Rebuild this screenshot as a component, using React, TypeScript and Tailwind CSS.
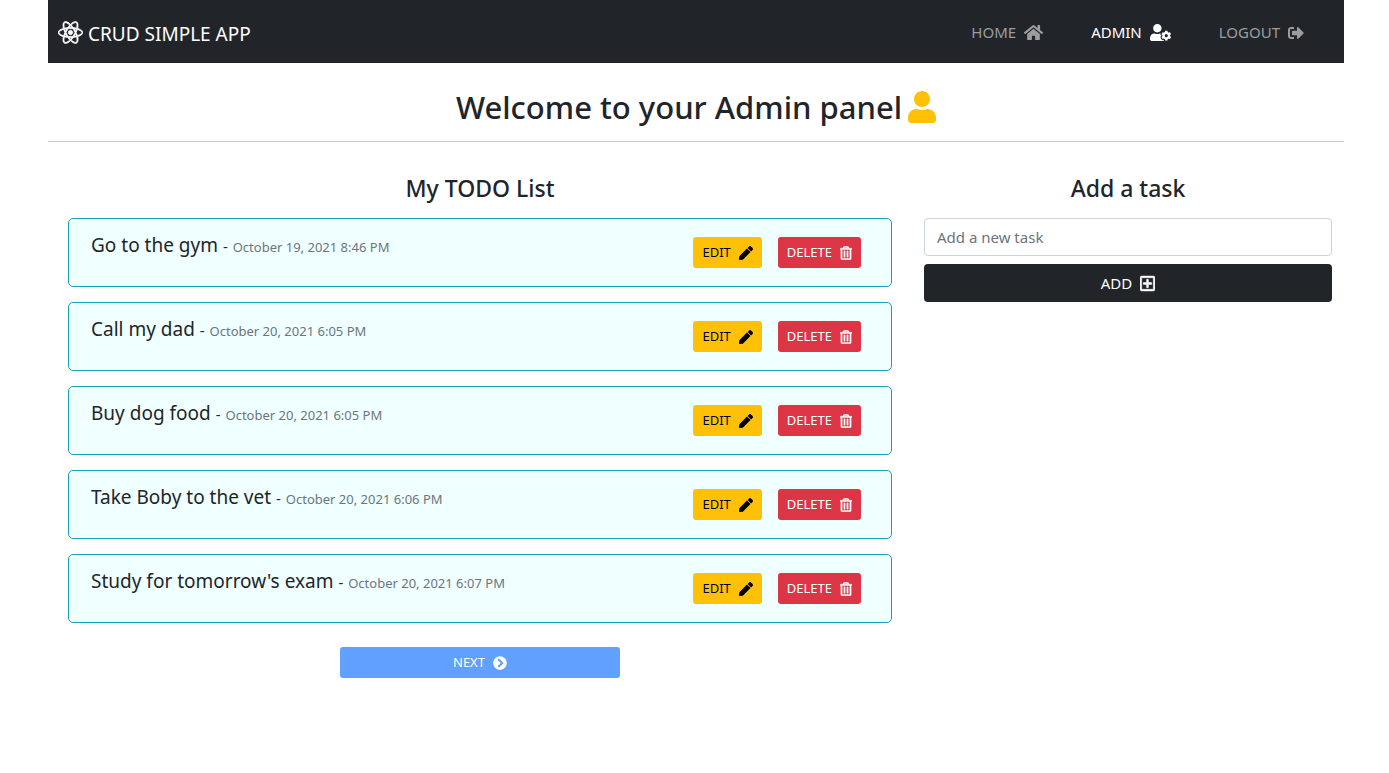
import { useState } from "react";
import {
  FaChevronCircleRight,
  FaHome,
  FaPen,
  FaReact,
  FaRegPlusSquare,
  FaRegTrashAlt,
  FaSignOutAlt,
  FaUser,
  FaUserCog,
} from "react-icons/fa";

const tasks = [
  { id: 1, title: "Go to the gym", date: "October 19, 2021 8:46 PM" },
  { id: 2, title: "Call my dad", date: "October 20, 2021 6:05 PM" },
  { id: 3, title: "Buy dog food", date: "October 20, 2021 6:05 PM" },
  { id: 4, title: "Take Boby to the vet", date: "October 20, 2021 6:06 PM" },
  { id: 5, title: "Study for tomorrow's exam", date: "October 20, 2021 6:07 PM" },
];

function Navbar() {
  return (
    <nav className="flex h-[63px] items-center justify-between bg-[#212529] pt-[2px] pr-10 pl-[10px] text-[15px] text-[#9b9d9f]">
      <a href="#" className="flex items-center gap-[5px] pt-1 text-[19px] text-white">
        <FaReact className="mb-1 size-[25px] stroke-white stroke-[16]" />
        CRUD SIMPLE APP
      </a>
      <div className="flex items-center gap-12">
        <a href="#home" className="flex items-center gap-2">
          HOME <FaHome className="h-[17px] w-[19px]" />
        </a>
        <a href="#admin" className="flex items-center gap-2 text-white">
          ADMIN <FaUserCog className="h-[17px] w-[21px]" />
        </a>
        <a href="#logout" className="flex items-center gap-2">
          LOGOUT <FaSignOutAlt className="size-4" />
        </a>
      </div>
    </nav>
  );
}

function TaskCard({ title, date }: { title: string; date: string }) {
  return (
    <li className="flex items-start justify-between rounded-[5px] border border-[#17a2b8] bg-[#f0ffff] pt-[18px] pr-[30px] pb-[18px] pl-[22px]">
      <p className="-mt-1 text-[19px] leading-6">
        {title} <span className="text-[15px]">-</span>{" "}
        <small className="text-[13px] text-[#6c757d]">{date}</small>
      </p>
      <div className="flex gap-4 text-[13px]">
        <button type="button" className="flex h-[31px] items-center gap-2 rounded-[3px] bg-[#ffc107] px-[9px] text-black">
          EDIT <FaPen className="size-[14px]" />
        </button>
        <button type="button" className="flex h-[31px] items-center gap-2 rounded-[3px] bg-[#dc3545] px-[9px] text-white">
          DELETE <FaRegTrashAlt className="h-[14px] w-3 stroke-white stroke-[16]" />
        </button>
      </div>
    </li>
  );
}

export default function App() {
  const [task, setTask] = useState("");

  return (
    <div className="pr-[45px] pl-12 font-['Noto_Sans','Open_Sans',sans-serif] text-[#212529]">
      <Navbar />
      <h1 className="flex h-[79px] items-center justify-center gap-[6px] border-b border-[#c8c9ca] pt-[10px] text-[31px] font-medium">
        <span>Welcome to your Admin panel</span>
        <FaUser className="h-8 w-7 text-[#ffc107]" />
      </h1>
      <main className="grid grid-cols-3 pt-[30px]">
        <section className="col-span-2 px-3">
          <h2 className="mb-[14px] text-center text-[23px] leading-8 font-medium">My TODO List</h2>
          <ul className="flex flex-col gap-[15px] px-2">
            {tasks.map((item) => (
              <TaskCard key={item.id} title={item.title} date={item.date} />
            ))}
          </ul>
          <button
            type="button"
            className="mx-auto mt-6 flex h-[31px] w-1/3 items-center justify-center gap-2 rounded-[3px] bg-[#62a0ff] text-[13px] text-white"
          >
            NEXT <FaChevronCircleRight className="size-[14px]" />
          </button>
        </section>
        <section className="px-3">
          <h2 className="mb-[14px] text-center text-[23px] leading-8 font-medium">Add a task</h2>
          <form className="flex flex-col gap-2" onSubmit={(event) => event.preventDefault()}>
            <input
              type="text"
              aria-label="Add a new task"
              placeholder="Add a new task"
              value={task}
              onChange={(event) => setTask(event.target.value)}
              className="h-[38px] w-full rounded border border-[#ced4da] px-3 text-[15px] placeholder:text-[#6c757d]"
            />
            <button
              type="submit"
              className="flex h-[38px] items-center justify-center gap-2 rounded bg-[#212529] text-[15px] text-white"
            >
              ADD <FaRegPlusSquare className="h-[17px] w-[15px] stroke-white stroke-[16]" />
            </button>
          </form>
        </section>
      </main>
    </div>
  );
}
